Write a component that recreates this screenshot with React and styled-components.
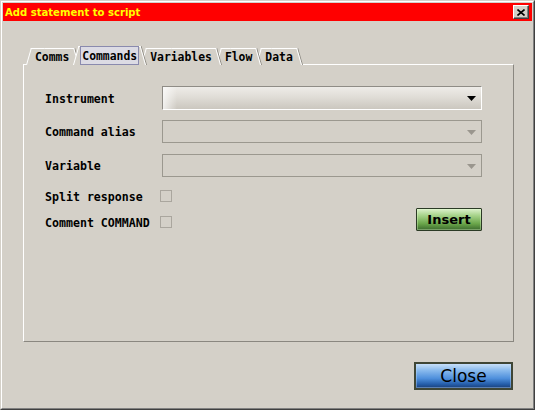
import React from "react";
import styled, { createGlobalStyle } from "styled-components";

const GlobalStyle = createGlobalStyle`
  html, body { margin: 0; padding: 0; background: #d4d0c8; }
  body { width: 535px; height: 410px; overflow: hidden; }
`;

const mono = `"DejaVu Sans Mono", "Liberation Mono", monospace`;
const sans = `"DejaVu Sans", "Liberation Sans", sans-serif`;

// outer window frame
const Window = styled.div`
  box-sizing: border-box;
  width: 535px;
  height: 410px;
  border: 1px solid;
  border-color: #d4d0c8 #404040 #404040 #d4d0c8;
  background: #d4d0c8;
`;

const Frame = styled.div`
  box-sizing: border-box;
  height: 100%;
  border: 1px solid;
  border-color: #ffffff #808080 #808080 #ffffff;
  padding: 1px;
  display: flex;
  flex-direction: column;
`;

const TitleBar = styled.div`
  height: 18px;
  background: #ff0000;
  display: flex;
  align-items: center;
  justify-content: space-between;
  padding: 0 3px 0 2px;
`;

const Title = styled.span`
  font-family: "DejaVu Sans Condensed", ${sans};
  font-stretch: semi-condensed;
  font-weight: bold;
  font-size: 11.2px;
  color: #ffff00;
`;

const CloseBox = styled.button`
  box-sizing: border-box;
  width: 16px;
  height: 14px;
  padding: 0;
  background: #d4d0c8;
  border: 1px solid;
  border-color: #ffffff #404040 #404040 #ffffff;
  box-shadow: inset -1px -1px 0 #808080;
  display: flex;
  align-items: center;
  justify-content: center;
`;

const Body = styled.div`
  padding: 25px 18px 0 20px;
  display: flex;
  flex-direction: column;
`;

const TabBar = styled.div`
  display: flex;
  align-items: flex-end;
  height: 19px;
  padding-left: 3px;
  position: relative;
  z-index: 2;
  margin-bottom: -1px;
`;

const Tab = styled.div`
  position: relative;
  z-index: ${(p) => p.$z};
  height: ${(p) => (p.$active ? 19 : 17)}px;
  box-sizing: border-box;
  padding: 0 ${(p) => p.$pad || 9}px;
  margin-left: ${(p) => (p.$first ? 0 : -5)}px;
  display: flex;
  align-items: center;
  font-family: ${mono};
  font-weight: bold;
  font-size: 11.4px;
  color: #000;

  &::before,
  &::after {
    content: "";
    position: absolute;
    top: 0;
    bottom: 0;
    width: 55%;
    background: #d4d0c8;
    border-top: 1px solid #ffffff;
    z-index: -1;
    transform-origin: bottom;
  }
  &::before {
    left: 0;
    border-left: 1px solid #ffffff;
    transform: skewX(-16deg);
  }
  &::after {
    right: 0;
    border-right: 1px solid #ffffff;
    box-shadow: 1px 0 0 #8f8c85;
    transform: skewX(16deg);
  }
`;

const TabFocus = styled.span`
  padding: 0 1px;
  height: 17px;
  display: flex;
  align-items: center;
  border: 1px solid #8a8aae;
  background: #dcdbe4;
`;

const Panel = styled.div`
  box-sizing: border-box;
  height: 278px;
  border: 1px solid;
  border-color: #ffffff #8a8780 #8a8780 #ffffff;
  padding: 21px 31px 0 21px;
  display: flex;
  flex-direction: column;
`;

const Row = styled.div`
  display: flex;
  align-items: center;
  height: ${(p) => p.$h || 23}px;
  margin-bottom: ${(p) => p.$mb || 0}px;
`;

const Label = styled.span`
  width: 117px;
  flex: none;
  padding-top: 1px;
  font-family: ${mono};
  font-weight: bold;
  font-size: 11.6px;
  color: #000;
`;

const Combo = styled.div`
  box-sizing: border-box;
  width: 320px;
  height: ${(p) => (p.$disabled ? 23 : 24)}px;
  border: 1px solid;
  border-color: ${(p) =>
    p.$disabled ? "#9b988f" : "#8f8c86 #ffffff #ffffff #8f8c86"};
  background: ${(p) =>
    p.$disabled
      ? "transparent"
      : "linear-gradient(to right, rgba(255,255,255,0.7) 0, rgba(255,255,255,0) 14px), linear-gradient(to bottom, #eeece8 0%, #e0ddd7 45%, #cbc7bf 100%)"};
  display: flex;
  align-items: center;
  justify-content: flex-end;
  padding-right: 5px;
`;

const CheckBox = styled.span`
  box-sizing: border-box;
  width: 12px;
  height: 12px;
  margin-left: -2px;
  border: 1px solid #aaa69e;
`;

const Lower = styled.div`
  display: flex;
  align-items: flex-end;
  justify-content: space-between;
  margin-top: 10px;
`;

const Checks = styled.div`
  display: flex;
  flex-direction: column;
  gap: 8px;
`;

const InsertButton = styled.button`
  box-sizing: border-box;
  width: 66px;
  height: 23px;
  margin-bottom: 0;
  padding: 0;
  border: 1px solid #2b3a25;
  border-radius: 1px;
  background: linear-gradient(
    to bottom,
    #dcf0cc 0%,
    #a8d48c 30%,
    #6aa64a 70%,
    #3c6a2e 100%
  );
  box-shadow: inset 0 0 0 1px rgba(230, 255, 210, 0.35);
  font-family: ${sans};
  font-weight: bold;
  font-size: 13px;
  color: #000;
`;

const Footer = styled.div`
  display: flex;
  justify-content: flex-end;
  padding: 20px 1px 0 0;
`;

const CloseButton = styled.button`
  box-sizing: border-box;
  width: 99px;
  height: 28px;
  padding: 0;
  border: 2px solid #3f4636;
  background: linear-gradient(
    to bottom,
    #c8e0f8 0%,
    #8cbcee 25%,
    #4e8fdc 60%,
    #245ca8 85%,
    #1a3f78 100%
  );
  box-shadow: inset 0 0 0 1px rgba(190, 220, 255, 0.4);
  font-family: ${sans};
  font-size: 17px;
  color: #000;
`;

const Arrow = ({ color }) => (
  <svg width="9" height="6" viewBox="0 0 9 6">
    <path d="M0 1h9L4.5 6z" fill={color} />
  </svg>
);

const XGlyph = () => (
  <svg width="8" height="7" viewBox="0 0 8 7">
    <path d="M0.5 0.5l7 6M7.5 0.5l-7 6" stroke="#000" strokeWidth="1.6" />
  </svg>
);

const tabs = ["Comms", "Commands", "Variables", "Flow", "Data"];
const activeTab = 1;

export default function App() {
  return (
    <>
      <GlobalStyle />
      <Window>
        <Frame>
          <TitleBar>
            <Title>Add statement to script</Title>
            <CloseBox>
              <XGlyph />
            </CloseBox>
          </TitleBar>
          <Body>
            <TabBar>
              {tabs.map((t, i) => {
                const active = i === activeTab;
                const z = active ? 10 : i < activeTab ? i + 1 : 9 - i;
                return (
                  <Tab
                    key={t}
                    $z={z}
                    $active={active}
                    $first={i === 0}
                    $pad={active ? 7 : 9}
                  >
                    {active ? <TabFocus>{t}</TabFocus> : t}
                  </Tab>
                );
              })}
            </TabBar>
            <Panel>
              <Row $h={24} $mb={10}>
                <Label>Instrument</Label>
                <Combo>
                  <Arrow color="#000" />
                </Combo>
              </Row>
              <Row $mb={11}>
                <Label>Command alias</Label>
                <Combo $disabled>
                  <Arrow color="#9a968e" />
                </Combo>
              </Row>
              <Row>
                <Label>Variable</Label>
                <Combo $disabled>
                  <Arrow color="#9a968e" />
                </Combo>
              </Row>
              <Lower>
                <Checks>
                  <Row $h={18}>
                    <Label>Split response</Label>
                    <CheckBox />
                  </Row>
                  <Row $h={18}>
                    <Label>Comment COMMAND</Label>
                    <CheckBox />
                  </Row>
                </Checks>
                <InsertButton>Insert</InsertButton>
              </Lower>
            </Panel>
            <Footer>
              <CloseButton>Close</CloseButton>
            </Footer>
          </Body>
        </Frame>
      </Window>
    </>
  );
}
